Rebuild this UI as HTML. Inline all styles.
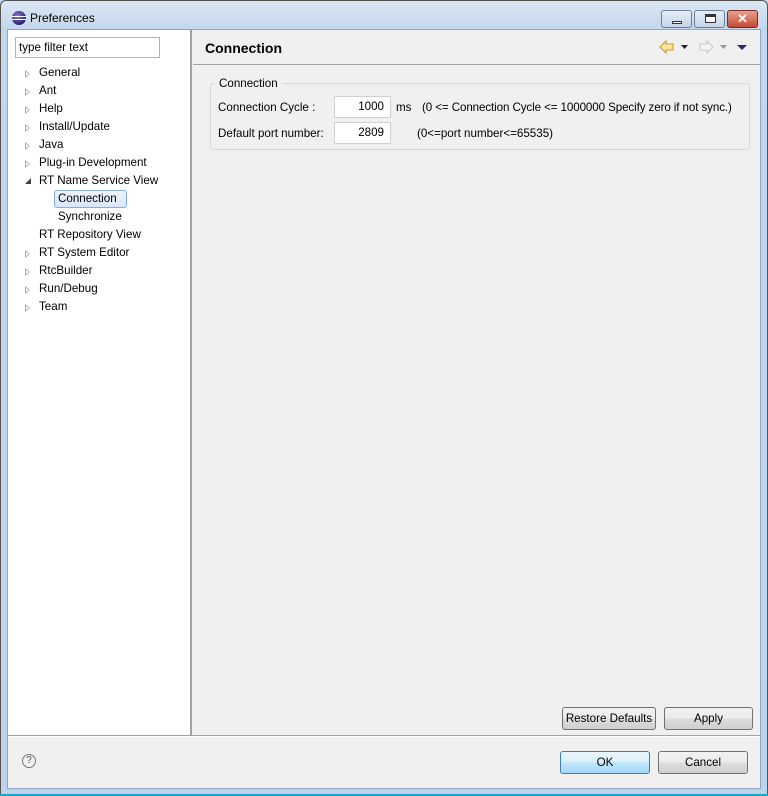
<!DOCTYPE html>
<html><head><style>
*{margin:0;padding:0;box-sizing:border-box}
body{width:768px;height:796px;background:#bcd3ea;font-family:"Liberation Sans",sans-serif;font-size:11.6px;color:#000;position:relative;overflow:hidden}
.frame{position:absolute;left:0;top:0;width:768px;height:796px;border:1px solid #555;border-radius:6px 6px 0 0;background:linear-gradient(#dbe7f4,#c2d6ec 30px,#bcd3ea);}
.abs{position:absolute}
.client{position:absolute;left:8px;top:30px;width:752px;height:758px;background:#f0f0f0;box-shadow:0 0 0 1px #8fa7c2}
.left{position:absolute;left:0;top:0;width:184px;height:705px;background:#fff;border-right:2px solid #a0a0a0}
.tree{position:absolute;left:0;top:1px}
.tree div{position:absolute;white-space:nowrap}
.tri{position:absolute;width:0;height:0;border-left:5px solid #a8a8a8;border-top:4px solid transparent;border-bottom:4px solid transparent}
.tri::after{content:"";position:absolute;left:-4px;top:-2px;border-left:3px solid #fff;border-top:2px solid transparent;border-bottom:2px solid transparent}
.btn{position:absolute;border:1px solid #707070;border-radius:3px;background:linear-gradient(#f2f2f2,#ebebeb 50%,#dddddd 51%,#cfcfcf);text-align:center;line-height:21px}
.inp{position:absolute;background:#fff;border:1px solid #d0d0d0;text-align:right;padding-right:6px;line-height:20px}
</style></head><body>
<div class="frame"></div>
<div class="abs" style="left:12px;top:11px;width:14px;height:14px;border-radius:50%;background:radial-gradient(circle at 40% 35%,#8a7ad0,#2c2470 70%)"></div>
<div class="abs" style="left:12px;top:16px;width:14px;height:1px;background:#fff"></div>
<div class="abs" style="left:12px;top:19px;width:14px;height:1px;background:#fff"></div>
<div class="abs" style="left:30px;top:11px;font-size:12px">Preferences</div>
<div class="abs" style="left:661px;top:10px;width:31px;height:18px;border:1px solid #6e7f96;border-radius:3px;background:linear-gradient(#e6eef8,#c4d4e8)"><div class="abs" style="left:10px;top:10px;width:10px;height:3px;border:1px solid #333;background:#fff"></div></div>
<div class="abs" style="left:694px;top:10px;width:31px;height:18px;border:1px solid #6e7f96;border-radius:3px;background:linear-gradient(#e6eef8,#c4d4e8)"><div class="abs" style="left:10px;top:3px;width:11px;height:9px;border:1px solid #333;border-top-width:3px;background:#fff"></div></div>
<div class="abs" style="left:727px;top:10px;width:31px;height:18px;border:1px solid #7a2a20;border-radius:3px;background:linear-gradient(#e8a090,#c44a34);color:#fff;font-weight:bold;text-align:center;line-height:16px;font-size:13px">✕</div>
<div class="client">
 <div class="left">
  <div class="abs" style="left:7px;top:7px;width:145px;height:21px;border:1px solid #b4b4b4;padding-left:3px;line-height:20px">type filter text</div>
  <div class="tree">
   <div class="tri" style="left:17px;top:39px"></div><div style="left:31px;top:35px">General</div>
   <div class="tri" style="left:17px;top:57px"></div><div style="left:31px;top:53px">Ant</div>
   <div class="tri" style="left:17px;top:75px"></div><div style="left:31px;top:71px">Help</div>
   <div class="tri" style="left:17px;top:93px"></div><div style="left:31px;top:89px">Install/Update</div>
   <div class="tri" style="left:17px;top:111px"></div><div style="left:31px;top:107px">Java</div>
   <div class="tri" style="left:17px;top:129px"></div><div style="left:31px;top:125px">Plug-in Development</div>
   <div style="left:17px;top:147px;width:0;height:0;border-right:6px solid #404040;border-top:6px solid transparent"></div><div style="left:31px;top:143px">RT Name Service View</div>
   <div style="left:46px;top:159px;width:73px;height:18px;border:1px solid #84acdd;border-radius:3px;background:linear-gradient(#eef5fd,#d6e7fb)"></div><div style="left:50px;top:161px">Connection</div>
   <div style="left:50px;top:179px">Synchronize</div>
   <div style="left:31px;top:197px">RT Repository View</div>
   <div class="tri" style="left:17px;top:219px"></div><div style="left:31px;top:215px">RT System Editor</div>
   <div class="tri" style="left:17px;top:237px"></div><div style="left:31px;top:233px">RtcBuilder</div>
   <div class="tri" style="left:17px;top:255px"></div><div style="left:31px;top:251px">Run/Debug</div>
   <div class="tri" style="left:17px;top:273px"></div><div style="left:31px;top:269px">Team</div>
  </div>
 </div>
 <div class="abs" style="left:185px;top:0;width:567px;height:35px;border-bottom:1px solid #a0a0a0"></div>
 <div class="abs" style="left:197px;top:10px;font-size:14px;font-weight:bold">Connection</div>
 <svg class="abs" style="left:650px;top:9px" width="95" height="16">
  <path d="M2 8 L8 2 V5 H15 V11 H8 V14 Z" fill="#fbe7a0" stroke="#c9952b"/>
  <path d="M23 6 h7 l-3.5 4z" fill="#222"/>
  <path d="M55 8 L49 2 V5 H42 V11 H49 V14 Z" fill="#f4f4f4" stroke="#c8c8c8"/>
  <path d="M62 6 h7 l-3.5 4z" fill="#999"/>
  <path d="M79 6 h10 l-5 5z" fill="#2a2a6a"/>
 </svg>
 <div class="abs" style="left:202px;top:53px;width:540px;height:67px;border:1px solid #d8d8d8;border-radius:3px"></div>
 <div class="abs" style="left:207px;top:47px;background:#f0f0f0;padding:0 4px">Connection</div>
 <div class="abs" style="left:210px;top:71px">Connection Cycle :</div>
 <div class="inp" style="left:326px;top:66px;width:57px;height:22px">1000</div>
 <div class="abs" style="left:388px;top:71px">ms</div>
 <div class="abs" style="left:414px;top:71px;letter-spacing:-0.1px">(0 &lt;= Connection Cycle &lt;= 1000000 Specify zero if not sync.)</div>
 <div class="abs" style="left:210px;top:97px">Default port number:</div>
 <div class="inp" style="left:326px;top:92px;width:57px;height:22px">2809</div>
 <div class="abs" style="left:409px;top:97px">(0&lt;=port number&lt;=65535)</div>
 <div class="btn" style="left:554px;top:677px;width:94px;height:23px">Restore Defaults</div>
 <div class="btn" style="left:656px;top:677px;width:89px;height:23px">Apply</div>
 <div class="abs" style="left:0;top:705px;width:752px;height:2px;background:#a0a0a0;border-bottom:1px solid #fff"></div>
 <div class="abs" style="left:14px;top:724px;width:14px;height:14px;border:1px solid #777;border-radius:50%;font-size:10px;text-align:center;line-height:12px;color:#555">?</div>
 <div class="btn" style="left:552px;top:721px;width:90px;height:23px;border-color:#3c7fb1;background:linear-gradient(#eaf6fd,#d9f0fc 50%,#bee6fd 51%,#a7d9f5)">OK</div>
 <div class="btn" style="left:650px;top:721px;width:90px;height:23px">Cancel</div>
</div>
<div class="abs" style="left:0;top:794px;width:768px;height:2px;background:#1aa8c8"></div>
</body></html>
